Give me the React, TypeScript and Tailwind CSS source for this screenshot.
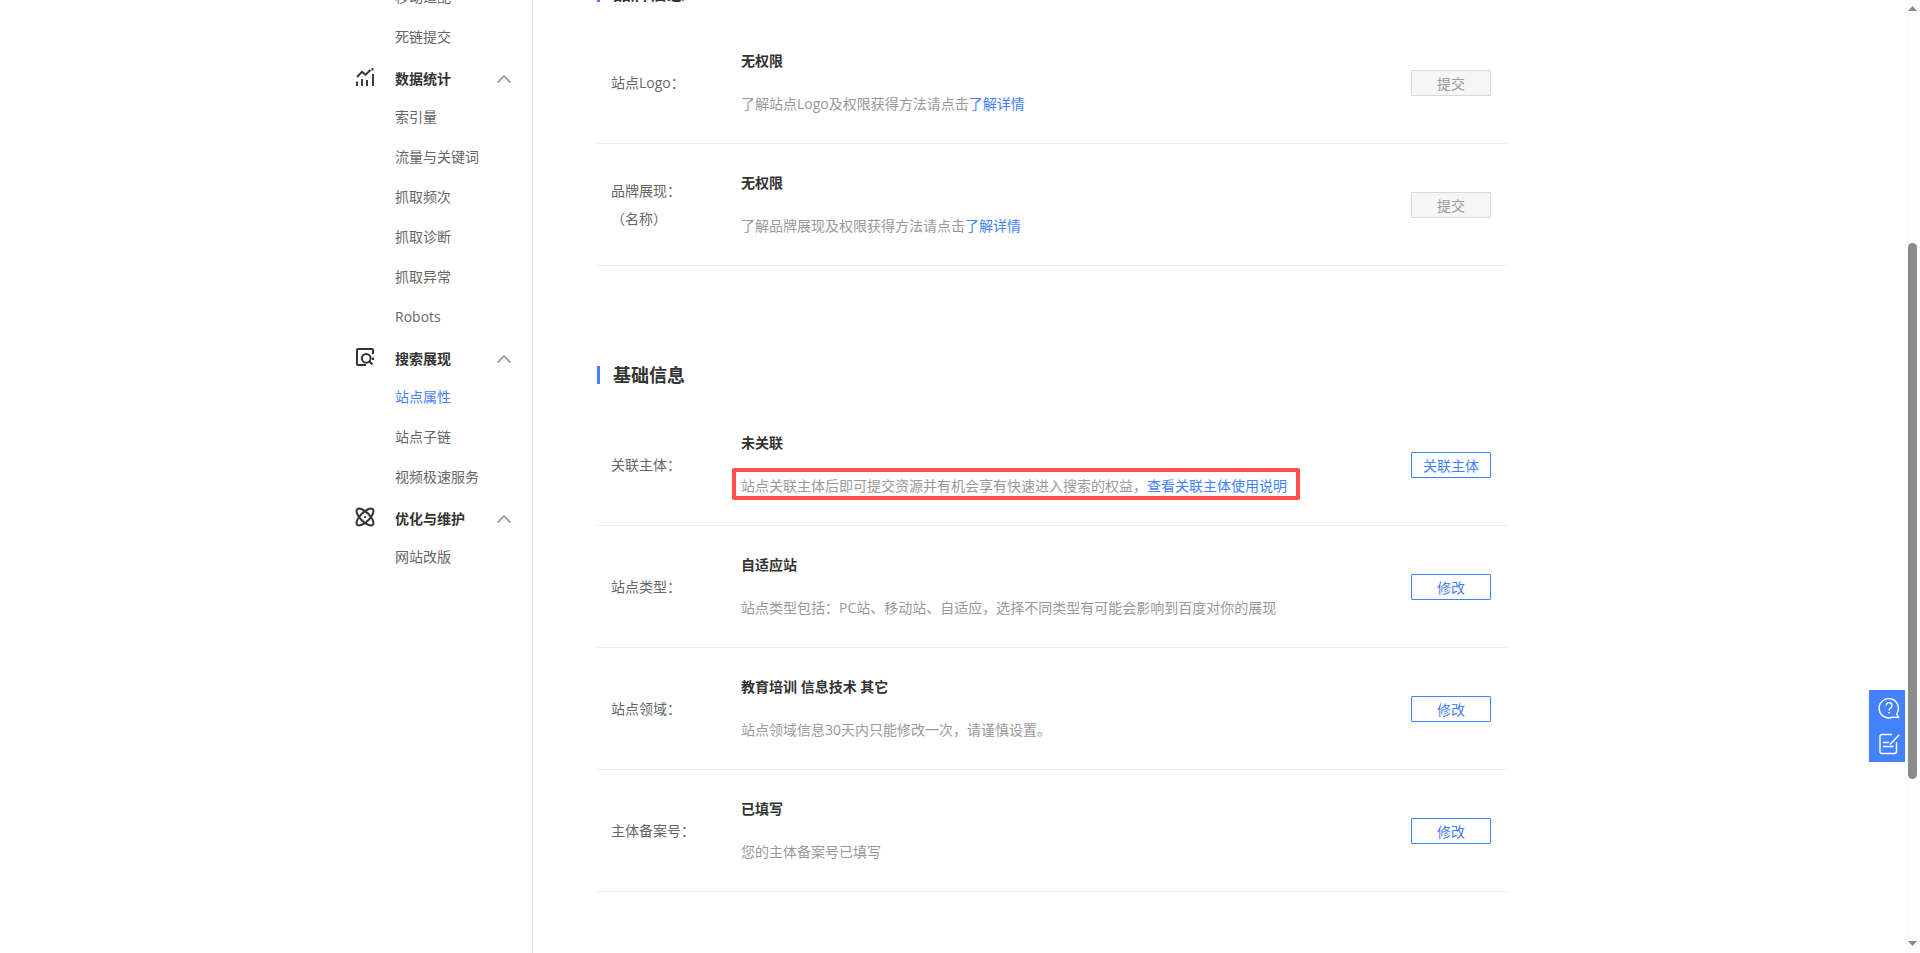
import { clsx } from "clsx";
import { ReactNode } from "react";

interface MenuGroup {
  title: string;
  icon?: ReactNode;
  items: string[];
}

interface SiteRow {
  label: string;
  subLabel?: string;
  value: string;
  desc: string;
  link?: string;
  action: string;
  disabled?: boolean;
  marked?: boolean;
}

const StatsIcon = () => (
  <svg width="20" height="20" viewBox="0 0 20 20" fill="none" stroke="#333" strokeWidth="1.9">
    <path d="M2 10L7 4.8L10.5 7.8L15.5 3" />
    <path d="M2 14.5v4.5M7 12v7M12 13v6M18 7v12M17.5 1v2.4" />
  </svg>
);

const SearchPageIcon = () => (
  <svg width="20" height="20" viewBox="0 0 20 20" fill="none" stroke="#333" strokeWidth="2">
    <path d="M18 7V3a1 1 0 0 0-1-1H3a1 1 0 0 0-1 1v14a1 1 0 0 0 1 1H11" />
    <circle cx="11.2" cy="11.3" r="4.4" />
    <path d="M14.2 14.3l3.2 3.2M18 10.5v2.5" />
  </svg>
);

const AtomIcon = () => (
  <svg width="20" height="20" viewBox="0 0 20 20" fill="none" stroke="#333" strokeWidth="2">
    <ellipse cx="10" cy="10" rx="11" ry="4.6" transform="rotate(45 10 10)" />
    <ellipse cx="10" cy="10" rx="11" ry="4.6" transform="rotate(-45 10 10)" />
    <circle cx="10" cy="10" r="1.1" fill="#333" stroke="none" />
  </svg>
);

const ChevronUp = () => (
  <svg width="14" height="8" viewBox="0 0 14 8" fill="none" stroke="#999" strokeWidth="1.8">
    <path d="M0.7 7.3L7 1.2L13.3 7.3" />
  </svg>
);

const menus: MenuGroup[] = [
  {
    title: "数据统计",
    icon: <StatsIcon />,
    items: ["索引量", "流量与关键词", "抓取频次", "抓取诊断", "抓取异常", "Robots"],
  },
  {
    title: "搜索展现",
    icon: <SearchPageIcon />,
    items: ["站点属性", "站点子链", "视频极速服务"],
  },
  {
    title: "优化与维护",
    icon: <AtomIcon />,
    items: ["网站改版"],
  },
];

const brandRows: SiteRow[] = [
  {
    label: "站点Logo：",
    value: "无权限",
    desc: "了解站点Logo及权限获得方法请点击",
    link: "了解详情",
    action: "提交",
    disabled: true,
  },
  {
    label: "品牌展现：",
    subLabel: "（名称）",
    value: "无权限",
    desc: "了解品牌展现及权限获得方法请点击",
    link: "了解详情",
    action: "提交",
    disabled: true,
  },
];

const basicRows: SiteRow[] = [
  {
    label: "关联主体：",
    value: "未关联",
    desc: "站点关联主体后即可提交资源并有机会享有快速进入搜索的权益，",
    link: "查看关联主体使用说明",
    action: "关联主体",
    marked: true,
  },
  {
    label: "站点类型：",
    value: "自适应站",
    desc: "站点类型包括：PC站、移动站、自适应，选择不同类型有可能会影响到百度对你的展现",
    action: "修改",
  },
  {
    label: "站点领域：",
    value: "教育培训 信息技术 其它",
    desc: "站点领域信息30天内只能修改一次，请谨慎设置。",
    action: "修改",
  },
  {
    label: "主体备案号：",
    value: "已填写",
    desc: "您的主体备案号已填写",
    action: "修改",
  },
];

function MenuItems({ items }: { items: string[] }) {
  return (
    <ul>
      {items.map(item => (
        <li key={item}>
          <a
            href="#"
            className={clsx(
              "block h-10 pl-[43px] leading-10",
              item === "站点属性" ? "text-[#4381fd]" : "text-[#666]"
            )}>
            {item}
          </a>
        </li>
      ))}
    </ul>
  );
}

function Sidebar() {
  return (
    <nav className="-mt-[23px] w-[181px] shrink-0 border-r border-[#e8e8e8]">
      <MenuItems items={["移动适配", "死链提交"]} />
      {menus.map(menu => (
        <div key={menu.title}>
          <button className="flex h-10 w-full items-center pt-1 pr-[21px] pl-[3px] font-bold text-[#333]">
            <span className="mr-5 pb-1">{menu.icon}</span>
            {menu.title}
            <span className="ml-auto">
              <ChevronUp />
            </span>
          </button>
          <MenuItems items={menu.items} />
        </div>
      ))}
    </nav>
  );
}

function Row({ label, subLabel, value, desc, link, action, disabled, marked }: SiteRow) {
  return (
    <div className="flex items-center border-b border-[#eee] py-7 pr-[18px] pl-3.5">
      <div className="-my-4 w-[130px] shrink-0 leading-7 text-[#666]">
        <p>{label}</p>
        {subLabel && <p>{subLabel}</p>}
      </div>
      <div className="grow leading-[22px]">
        <p className="font-bold text-[#333]">{value}</p>
        <p className="relative mt-[21px] w-fit text-[#999]">
          {desc}
          {link && (
            <a href="#" className="text-[#4381fd]">
              {link}
            </a>
          )}
          {marked && (
            <span className="absolute -top-[7px] -right-[13px] -bottom-[3px] -left-[9px] rounded-xs border-4 border-[#ff5050]" />
          )}
        </p>
      </div>
      <button
        disabled={disabled}
        className={clsx(
          "h-[26px] w-20 shrink-0 rounded-[1px] border pt-0.5 leading-[22px]",
          disabled
            ? "border-[#d9d9d9] bg-[#f6f6f6] text-[#999]"
            : "border-[#4381fd] bg-white text-[#4381fd]"
        )}>
        {action}
      </button>
    </div>
  );
}

function Section({ title, rows }: { title: string; rows: SiteRow[] }) {
  return (
    <section>
      <h2 className="mb-5 border-l-3 border-[#4381fd] pl-[13px] text-lg leading-[18px] font-bold text-[#333]">
        {title}
      </h2>
      {rows.map(row => (
        <Row key={row.label} {...row} />
      ))}
    </section>
  );
}

function FloatTools() {
  return (
    <div className="fixed top-[690px] right-[15px] flex h-[72px] w-9 flex-col bg-[#4381fd] pl-1">
      <button aria-label="帮助" className="flex grow items-center justify-center">
        <svg width="22" height="22" viewBox="0 0 22 22" fill="none" stroke="#fff" strokeWidth="1.4">
          <path d="M18.6 16.8A9.6 9.6 0 1 0 14.5 20.1L20.6 20.4L18.6 16.8" />
          <path d="M8.2 8.4a2.9 2.9 0 1 1 4.5 2.4c-1.1.8-1.6 1.3-1.6 2.7" />
          <path d="M11.1 15v1.6" />
        </svg>
      </button>
      <button aria-label="反馈" className="flex grow items-center justify-center">
        <svg width="22" height="22" viewBox="0 0 22 22" fill="none" stroke="#fff" strokeWidth="1.4">
          <path d="M14 1.5H4a2 2 0 0 0-2 2v15a2 2 0 0 0 2 2h12.5a2 2 0 0 0 2-2V9" />
          <path d="M5 9.5h6M5 13.5h10.5M12 11.5L21.3 1.8" />
        </svg>
      </button>
    </div>
  );
}

function ScrollTrack() {
  return (
    <div className="fixed inset-y-0 right-0 flex w-[15px] flex-col items-center bg-[#fcfcfc] pt-1.5 pb-[7px]">
      <svg width="9" height="5" viewBox="0 0 9 5" fill="#8b8b8b">
        <path d="M4.5 0L9 5H0z" />
      </svg>
      <div className="mt-[232px] h-[536px] w-[9px] rounded-full bg-[#8b8b8b]" />
      <svg className="mt-auto" width="9" height="5" viewBox="0 0 9 5" fill="#8b8b8b">
        <path d="M4.5 5L9 0H0z" />
      </svg>
    </div>
  );
}

export default function App() {
  return (
    <div className="h-screen overflow-hidden bg-white pr-[15px] font-['Open_Sans','Noto_Sans_CJK_SC',sans-serif] text-sm">
      <div className="mx-auto flex h-full max-w-[1201px]">
        <Sidebar />
        <main className="-mt-4 flex grow flex-col gap-[100px] pr-11 pl-16">
          <Section title="品牌信息" rows={brandRows} />
          <Section title="基础信息" rows={basicRows} />
        </main>
      </div>
      <FloatTools />
      <ScrollTrack />
    </div>
  );
}
